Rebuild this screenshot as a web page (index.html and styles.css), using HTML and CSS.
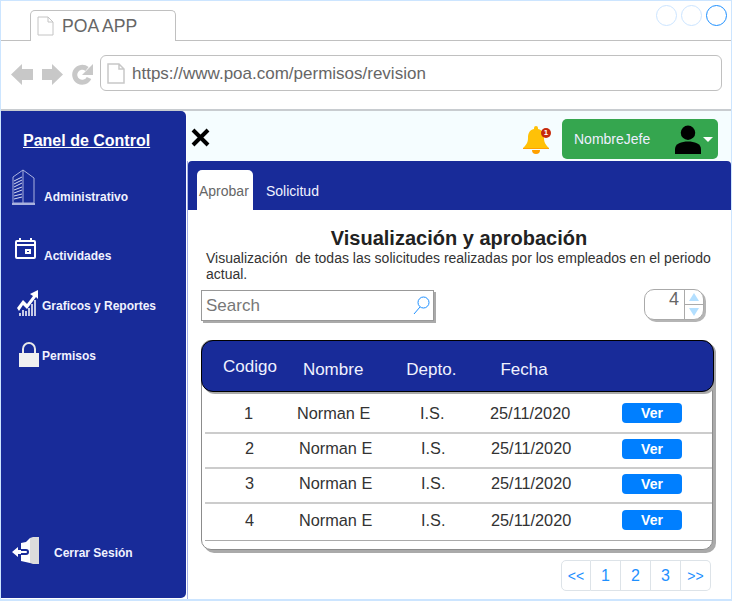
FILE: index.html
```html
<!DOCTYPE html>
<html lang="en">
<head>
  <meta charset="UTF-8">
  <title>POA APP</title>
  <link rel="stylesheet" href="styles.css">
</head>
<body>
  <div class="window">
    <div class="tabbar">
      <div class="tab">
        <svg class="page-icon" width="17" height="20" viewBox="0 0 17 20"><path d="M1 1H11L16 6V19H1Z M11 1V6H16" fill="#fff" stroke="#c4c4c4" stroke-width="1"/></svg>
        <span>POA APP</span>
      </div>
      <div class="win-buttons">
        <span class="win-btn"></span>
        <span class="win-btn"></span>
        <span class="win-btn on"></span>
      </div>
    </div>

    <div class="addressbar">
      <svg class="nav-icons" width="83" height="26" viewBox="0 0 83 26">
        <path d="M0 12.500L11 2V7H22V18H11V23Z" fill="#c8c8c8"/>
        <path d="M52 12.500L41 2V7H31V18H41V23Z" fill="#c8c8c8"/>
        <path d="M78 16A7.500 7.500 0 1 1 76 7" fill="none" stroke="#c8c8c8" stroke-width="5"/>
        <path d="M82 2V13H71Z" fill="#c8c8c8"/>
      </svg>
      <div class="url">
        <svg width="18" height="21" viewBox="0 0 18 21"><path d="M1 1H12L17 6V20H1Z M12 1V6H17" fill="#fff" stroke="#c8c8c8" stroke-width="1.500"/></svg>
        <span>https://www.poa.com/permisos/revision</span>
      </div>
    </div>

    <div class="app">
      <aside class="sidebar">
        <h2 class="side-title">Panel de Control</h2>
        <a class="side-item admin">
          <svg width="24" height="36" viewBox="0 0 24 36" fill="none" stroke="#aab2de"><path d="M1 34V8L11 1L22 9V34Z"/><path d="M0 35H23" stroke-width="2"/><path d="M11 1V34" /><path d="M2 12L10 8M2 15L10 11M2 18L10 14M2 21L10 18M2 24L10 21M2 27L10 25M2 30L10 28" stroke="#d5d9f0"/></svg>
          <span>Administrativo</span>
        </a>
        <a class="side-item act">
          <svg width="22" height="22" viewBox="0 0 22 22" fill="none" stroke="#fff" stroke-width="2"><rect x="1" y="3" width="19" height="17" rx="1"/><path d="M1 7H20M5 0V4M16 0V4"/><rect x="10" y="11" width="6" height="5" fill="#fff" stroke="none"/><rect x="12" y="13" width="2" height="1" fill="#182b99" stroke="none"/></svg>
          <span>Actividades</span>
        </a>
        <a class="side-item graf">
          <svg width="21" height="27" viewBox="0 0 21 27"><path d="M0 18L6 10L10 14L16 6L13 4L21 0V9L19 7L10 19L6 15L2 21Z" fill="#fff"/><path d="M3 26V23M6 26V20M9 26V21M12 26V18M15 26V14M18 26V10" stroke="#fff" stroke-width="1.500"/></svg>
          <span>Graficos y Reportes</span>
        </a>
        <a class="side-item perm">
          <svg width="20" height="25" viewBox="0 0 20 25"><path d="M4 12V7A6 6 0 0 1 16 7V12" fill="none" stroke="#e8e8e8" stroke-width="2"/><rect x="0" y="11" width="20" height="14" fill="#f0f0f0"/></svg>
          <span>Permisos</span>
        </a>
        <a class="side-item logout">
          <svg width="28" height="27" viewBox="0 0 28 27"><path d="M9 6L14 5L18 1V26L9 24Z" fill="#fff"/><path d="M18 1L21 0H27V27H21L18 26Z" fill="#dcdcdc"/><path d="M0 15L6 10V13H13V17H6V20Z" fill="#fff"/><path d="M9 13H14A2 2 0 0 1 14 17H9" fill="none" stroke="#182b99" stroke-width="2"/></svg>
          <span>Cerrar Sesión</span>
        </a>
      </aside>

      <main class="main">
        <div class="topbar">
          <svg class="close" width="19" height="19" viewBox="0 0 19 19"><path d="M2 2L17 17M17 2L2 17" stroke="#000" stroke-width="4"/></svg>
          <div class="bell">
            <svg width="28" height="29" viewBox="0 0 28 29"><path d="M14 1A2 2 0 0 1 16 3V4C21 5 22 9 22 13C22 18 24 20 27 23V24H1V23C4 20 6 18 6 13C6 9 7 5 12 4V3A2 2 0 0 1 14 1Z" fill="#ffc107"/><path d="M10 25H18A4 4 0 0 1 10 25Z" fill="#ffa000"/><path d="M1 23H27V24H1Z" fill="#ffa000"/></svg>
            <span class="badge">1</span>
          </div>
          <div class="user">
            <span>NombreJefe</span>
            <svg class="user-pic" width="26" height="29" viewBox="0 0 27 30"><circle cx="13.500" cy="8" r="7.500"/><path d="M0 30V25C0 19 7 17 13.500 17S27 19 27 25V30Z"/></svg>
            <span class="caret"></span>
          </div>
        </div>

        <div class="panel">
          <nav class="tabs">
            <a class="tabs-item active">Aprobar</a>
            <a class="tabs-item">Solicitud</a>
          </nav>
          <div class="content">
            <h1 class="title">Visualización y aprobación</h1>
            <p class="desc">Visualización&nbsp; de todas las solicitudes realizadas por los empleados en el periodo actual.</p>

            <div class="tools">
              <div class="search">
                <span>Search</span>
                <svg width="17" height="19" viewBox="0 0 17 19" fill="none" stroke="#1e90ff"><circle cx="10.500" cy="6.500" r="5.500"/><path d="M7 11L1 18"/></svg>
              </div>
              <div class="stepper">
                <span class="step-val">4</span>
                <div class="step-btns">
                  <span class="step-half"><span class="step-up"></span></span>
                  <span class="step-half"><span class="step-down"></span></span>
                </div>
              </div>
            </div>

            <div class="table">
              <div class="thead">
                <span class="th-cod">Codigo</span>
                <span class="th-nom">Nombre</span>
                <span class="th-dep">Depto.</span>
                <span class="th-fec">Fecha</span>
              </div>
              <div class="row r1">
                <span class="c-num">1</span><span class="c-nom">Norman E</span><span class="c-dep">I.S.</span><span class="c-fec">25/11/2020</span><a class="ver">Ver</a>
              </div>
              <div class="row r2">
                <span class="c-num">2</span><span class="c-nom">Norman E</span><span class="c-dep">I.S.</span><span class="c-fec">25/11/2020</span><a class="ver">Ver</a>
              </div>
              <div class="row r3">
                <span class="c-num">3</span><span class="c-nom">Norman E</span><span class="c-dep">I.S.</span><span class="c-fec">25/11/2020</span><a class="ver">Ver</a>
              </div>
              <div class="row r4">
                <span class="c-num">4</span><span class="c-nom">Norman E</span><span class="c-dep">I.S.</span><span class="c-fec">25/11/2020</span><a class="ver">Ver</a>
              </div>
            </div>

            <ul class="pager">
              <li class="pg-arrow">&lt;&lt;</li>
              <li>1</li>
              <li>2</li>
              <li>3</li>
              <li class="pg-arrow">&gt;&gt;</li>
            </ul>
          </div>
        </div>
      </main>
    </div>
  </div>
</body>
</html>
```

FILE: styles.css
```css
*{
  margin: 0;
  padding: 0;
  box-sizing: border-box;
}
body{
  font-family: "Liberation Sans", Arial, sans-serif;
  background: #fff;
}
li{
  list-style: none;
}

.window{
  width: 732px;
  height: 601px;
  border: 1px solid #cce5ff;
  border-bottom-width: 2px;
  overflow: hidden;
  display: flex;
  flex-direction: column;
}

/* browser chrome */
.tabbar{
  height: 40px;
  flex: none;
  padding: 9px 4px 0 29px;
  border-bottom: 1px solid #c0c0c0;
  display: flex;
  justify-content: space-between;
}
.tab{
  width: 146px;
  height: 31px;
  background: #fff;
  border: 1px solid #c0c0c0;
  border-bottom: 0;
  border-radius: 5px 5px 0 0;
  padding: 5px 0 0 6px;
  display: flex;
  gap: 8px;
  font-size: 17.6px;
  line-height: 20px;
  color: #666;
}
.win-buttons{
  display: flex;
  gap: 4px;
  margin-top: -5px;
}
.win-btn{
  width: 21px;
  height: 21px;
  border: 1px solid #cce5ff;
  border-radius: 50%;
}
.win-btn.on{
  border-color: #1e90ff;
}
.addressbar{
  height: 70px;
  flex: none;
  padding: 14px 9px 0 10px;
  border-bottom: 2px solid #c8ccd0;
  display: flex;
  align-items: flex-start;
}
.nav-icons{
  margin: 7px 6px 0 0;
  flex: none;
}
.url{
  flex: 1;
  height: 36px;
  border: 1px solid #c0c0c0;
  border-radius: 6px;
  padding: 7px 0 0 6px;
  display: flex;
  gap: 7px;
  font-size: 17px;
  line-height: 22px;
  color: #666;
}

/* app */
.app{
  flex: 1;
  display: flex;
  min-height: 0;
}
.sidebar{
  width: 185px;
  flex: none;
  margin-bottom: 1px;
  background: #182b99;
  border-radius: 0 5px 5px 0;
  color: #fff;
  display: flex;
  flex-direction: column;
}
.side-title{
  font-size: 16px;
  line-height: 20px;
  font-weight: bold;
  text-decoration: underline;
  margin: 20px 0 0 22px;
}
.side-item{
  display: flex;
  align-items: flex-end;
  font-size: 12px;
  font-weight: bold;
  color: #f0f2ff;
}
.admin{
  margin: 18px 0 0 11px;
  gap: 8px;
}
.admin span{
  padding-bottom: 1px;
}
.act{
  margin: 33px 0 0 14px;
  gap: 7px;
}
.act span{
  margin-bottom: -3px;
}
.graf{
  margin: 30px 0 0 16px;
  gap: 4px;
}
.graf span{
  padding-bottom: 4px;
}
.perm{
  margin: 25px 0 0 18px;
  gap: 3px;
}
.perm span{
  padding-bottom: 4px;
}
.logout{
  margin: auto 0 30px 11px;
  gap: 14px;
  align-items: center;
}
.logout svg{
  margin-bottom: 4px;
}

.main{
  flex: 1;
  min-width: 0;
  margin-left: 1px;
  display: flex;
  flex-direction: column;
}
.topbar{
  height: 50px;
  flex: none;
  background: #f5fdff;
  padding: 8px 13px 0 4px;
  display: flex;
  align-items: flex-start;
}
.close{
  margin: 9px 0 0 0;
}
.bell{
  position: relative;
  margin: 6px 12px 0 auto;
  height: 29px;
}
.badge{
  position: absolute;
  right: -1px;
  top: 3px;
  width: 10px;
  height: 10px;
  border-radius: 50%;
  background: #c62a0c;
  color: #fff;
  font-size: 8px;
  line-height: 10px;
  font-weight: bold;
  text-align: center;
}
.user{
  width: 156px;
  height: 40px;
  background: #35a64f;
  border-radius: 5px;
  display: flex;
  align-items: center;
  padding-left: 12px;
  color: #eef;
  font-size: 14px;
}
.user-pic{
  margin: 0 0 0 25px;
}
.caret{
  width: 0;
  height: 0;
  margin-left: 2px;
  border-left: 5px solid transparent;
  border-right: 5px solid transparent;
  border-top: 5px solid #fff;
}

.panel{
  flex: 1;
  display: flex;
  flex-direction: column;
  border-left: 1px solid #a8b2e6;
  min-height: 0;
}
.tabs{
  height: 49px;
  flex: none;
  background: #182b99;
  border-radius: 4px 4px 0 0;
  padding: 9px 0 0 9px;
  display: flex;
  gap: 13px;
}
.tabs-item{
  font-size: 14px;
  line-height: 42px;
  color: #f0f2ff;
}
.tabs-item.active{
  width: 56px;
  padding-left: 2px;
  background: #fff;
  color: #666;
  border-radius: 5px 5px 0 0;
}

.content{
  flex: 1;
  padding: 16px 18px 0 13px;
  display: flex;
  flex-direction: column;
}
.title{
  font-size: 20px;
  line-height: 24px;
  font-weight: bold;
  color: #222;
  text-align: center;
  padding-left: 4px;
}
.desc{
  font-size: 14px;
  line-height: 16px;
  color: #333;
  padding-left: 5px;
}
.tools{
  margin-top: 8px;
  display: flex;
  justify-content: space-between;
  align-items: flex-start;
  padding-right: 9px;
}
.search{
  width: 233px;
  height: 31px;
  background: #fff;
  border: 1px solid #999;
  box-shadow: 2px 2px 0 #aaa;
  padding: 0 3px 0 4px;
  display: flex;
  align-items: center;
  justify-content: space-between;
  font-size: 17px;
  color: #777;
}
.stepper{
  width: 60px;
  height: 31px;
  margin-top: -1px;
  background: #fff;
  border: 1px solid #aaa;
  border-radius: 10px;
  box-shadow: 2px 2px 0 #b5b5b5;
  display: flex;
}
.step-val{
  width: 39px;
  padding-right: 5px;
  text-align: right;
  font-size: 18px;
  line-height: 19px;
  color: #666;
}
.step-btns{
  flex: 1;
  border-left: 1px solid #aaa;
  display: flex;
  flex-direction: column;
}
.step-half{
  flex: 1;
  display: flex;
  align-items: center;
  justify-content: center;
}
.step-half:first-child{
  border-bottom: 1px solid #aaa;
}
.step-up,
.step-down{
  width: 0;
  height: 0;
  border-left: 5px solid transparent;
  border-right: 5px solid transparent;
}
.step-up{
  border-bottom: 8px solid #b3dfff;
}
.step-down{
  border-top: 8px solid #b3dfff;
}

.table{
  margin-top: 19px;
  width: 512px;
  height: 210px;
  background: #fff;
  border: 1px solid #8c8c8c;
  border-radius: 10px;
  box-shadow: 3px 3px 0 #aaa;
}
.thead{
  height: 52px;
  margin: -1px -2px 0 -1px;
  background: #182b99;
  border: 1px solid #000;
  border-radius: 12px;
  box-shadow: 2px 2px 0 #aaa;
  color: #f0f2ff;
  font-size: 17px;
  display: flex;
  align-items: center;
}
.th-cod{
  margin: 2px 0 0 21px;
}
.th-nom{
  margin: 7px 0 0 26px;
}
.th-dep{
  margin: 7px 0 0 43px;
}
.th-fec{
  margin: 7px 0 0 44px;
}
.row{
  display: flex;
  align-items: center;
  margin: 0 0 0 3px;
  height: 35px;
  border-bottom: 2px solid #ccc;
  font-size: 16.3px;
  color: #333;
  padding-bottom: 5px;
}
.r1{
  height: 42px;
  padding: 2px 0 0;
}
.r4{
  height: 37px;
  border-bottom: 1px solid #aaa;
  padding-bottom: 4px;
}
.c-num{
  width: 92px;
  padding-left: 39px;
}
.c-nom{
  width: 123px;
}
.c-dep{
  width: 70px;
}
.c-fec{
  width: 132px;
}
.r2 .c-num,
.r3 .c-num,
.r4 .c-num{
  width: 94px;
  padding-left: 40px;
}
.r2 .c-nom,
.r3 .c-nom,
.r4 .c-nom{
  width: 122px;
}
.r2 .c-fec,
.r3 .c-fec,
.r4 .c-fec{
  width: 131px;
}
.ver{
  width: 60px;
  height: 20px;
  background: #007fff;
  border-radius: 4px;
  color: #fff;
  font-size: 14px;
  font-weight: bold;
  line-height: 20px;
  text-align: center;
}
.r2 .ver,
.r3 .ver{
  margin-top: 2px;
}
.pager{
  display: flex;
  justify-content: flex-end;
  margin: 10px 0 0 0;
  width: 510px;
  height: 31px;
  font-size: 16px;
  color: #1e90ff;
}
.pager li{
  width: 30px;
  border: 1px solid #dde3e8;
  border-left-width: 0;
  text-align: center;
  line-height: 30px;
}
.pager li:first-child{
  border-left-width: 1px;
  border-radius: 5px 0 0 5px;
}
.pager li:last-child{
  border-radius: 0 5px 5px 0;
}
.pager .pg-arrow{
  font-size: 14px;
}
```
